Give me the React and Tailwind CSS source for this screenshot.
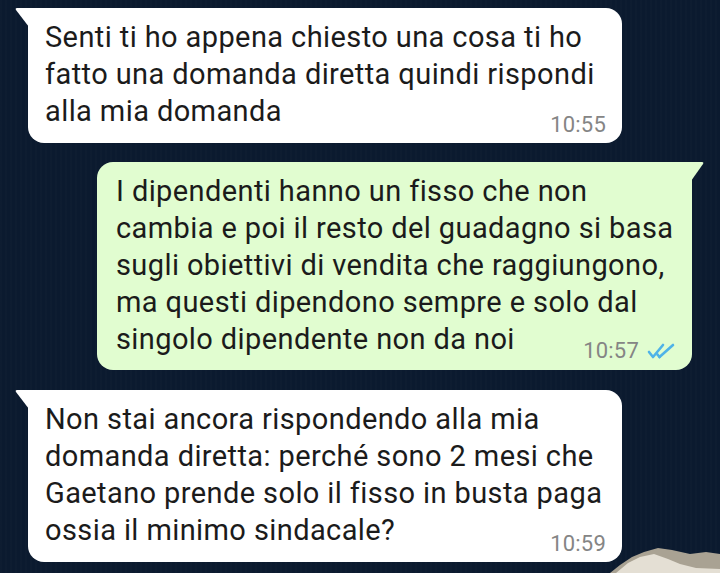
function Ticks() {
  return (
    <svg width="29" height="16" viewBox="0 0 29 16" fill="none" stroke="#4fb3e8" strokeWidth="2.6" strokeLinecap="round" strokeLinejoin="round">
      <path d="M2 9 L6 14 L16 2" />
      <path d="M12.5 14 L26 2" />
      <path d="M10.5 11.5 L12.5 14" />
    </svg>
  )
}

function Incoming({ lines, time, tail }) {
  return (
    <div className="relative ml-[28px] w-[594px]">
      {tail && (
        <svg className="absolute -left-[13px] top-0" width="14" height="19" viewBox="0 0 14 19">
          <path d="M14 0 L2 0 Q0 0 1 2 L14 19 Z" fill="#ffffff" />
        </svg>
      )}
      <div className="relative rounded-[16px] rounded-tl-none bg-white pl-[17px] pr-4 pt-[11px] pb-[13px] text-[29px] leading-[37px] tracking-[0.4px] text-[#1b1b1b]">
        {lines.map((l, i) => (
          <div key={i} className="whitespace-nowrap">{l}</div>
        ))}
        <span className="absolute bottom-[6px] right-[16px] text-[22px] leading-[24px] tracking-[0.2px] text-[#858585]">{time}</span>
      </div>
    </div>
  )
}

function Outgoing({ lines, time }) {
  return (
    <div className="relative ml-[97px] w-[595px]">
      <svg className="absolute -right-[12px] top-0" width="13" height="19" viewBox="0 0 13 19">
        <path d="M0 0 L11 0 Q13 0 12 2 L0 19 Z" fill="#e1fdd0" />
      </svg>
      <div className="relative rounded-[16px] rounded-tr-none bg-[#e1fdd0] pl-[19px] pr-4 pt-[11px] pb-[12px] text-[29px] leading-[37px] tracking-[0.4px] text-[#1b1b1b]">
        {lines.map((l, i) => (
          <div key={i} className="whitespace-nowrap">{l}</div>
        ))}
        <span className="absolute bottom-[7px] right-[16px] flex items-center gap-[8px] text-[22px] leading-[24px] tracking-[0.2px] text-[#858585]">
          {time}
          <Ticks />
        </span>
      </div>
    </div>
  )
}

export default function App() {
  return (
    <div
      className="relative h-[573px] w-[720px] overflow-hidden bg-[#0b1a2f]"
      style={{ fontFamily: 'Roboto, "Noto Sans", sans-serif' }}
    >
      <div className="absolute inset-0 bg-[repeating-linear-gradient(90deg,rgba(255,255,255,0.012)_0px,rgba(255,255,255,0.012)_2px,transparent_2px,transparent_5px)]" />
      <svg className="absolute bottom-0 right-0" width="110" height="36" viewBox="0 0 110 36">
        <path d="M0 36 L10 28 L22 20 L34 15 L48 11 L62 13 L80 17 L96 15 L110 17 L110 36 Z" fill="#a9a293" />
        <path d="M6 36 L18 26 L30 20 L44 17 L58 22 L70 27 L86 31 L110 32 L110 36 Z" fill="#e4dfd4" />
      </svg>
      <div className="relative flex flex-col gap-[19px] pt-[8px]">
        <Incoming
          tail
          time="10:55"
          lines={[
            'Senti ti ho appena chiesto una cosa ti ho',
            'fatto una domanda diretta quindi rispondi',
            'alla mia domanda',
          ]}
        />
        <Outgoing
          time="10:57"
          lines={[
            'I dipendenti hanno un fisso che non',
            'cambia e poi il resto del guadagno si basa',
            'sugli obiettivi di vendita che raggiungono,',
            'ma questi dipendono sempre e solo dal',
            'singolo dipendente non da noi',
          ]}
        />
        <div className="mt-[1px]">
          <Incoming
            tail
            time="10:59"
            lines={[
              'Non stai ancora rispondendo alla mia',
              'domanda diretta: perché sono 2 mesi che',
              'Gaetano prende solo il fisso in busta paga',
              'ossia il minimo sindacale?',
            ]}
          />
        </div>
      </div>
    </div>
  )
}
